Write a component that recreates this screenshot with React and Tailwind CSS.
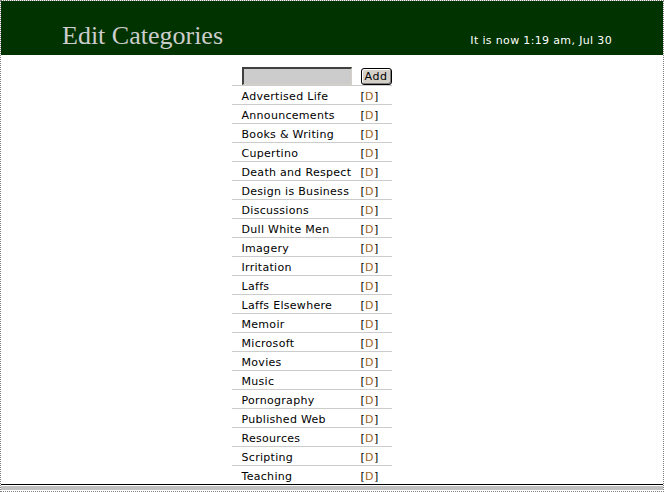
import React from "react";

const cats = [
  "Advertised Life",
  "Announcements",
  "Books & Writing",
  "Cupertino",
  "Death and Respect",
  "Design is Business",
  "Discussions",
  "Dull White Men",
  "Imagery",
  "Irritation",
  "Laffs",
  "Laffs Elsewhere",
  "Memoir",
  "Microsoft",
  "Movies",
  "Music",
  "Pornography",
  "Published Web",
  "Resources",
  "Scripting",
  "Teaching",
];

export default function App() {
  return (
    <div className="w-[664px] h-[492px] bg-white border border-dotted border-[#808080] flex flex-col overflow-hidden">
      <div className="h-[54px] bg-[#003300] flex items-end justify-between pl-[61px] pr-[51px] shrink-0">
        <div
          className="text-[#cccccc] text-[26px] leading-none pb-[6px]"
          style={{ fontFamily: '"Liberation Serif", "DejaVu Serif", serif' }}
        >
          Edit Categories
        </div>
        <div
          className="text-white text-[11px] leading-none pb-[9px] tracking-[0.35px]"
          style={{ fontFamily: '"DejaVu Sans", Verdana, sans-serif' }}
        >
          It is now 1:19 am, Jul 30
        </div>
      </div>
      <div
        className="h-[429px] overflow-hidden shrink-0 flex justify-center"
        style={{ fontFamily: '"DejaVu Sans", Verdana, sans-serif' }}
      >
        <div className="w-[160px] ml-[-41px] pt-[12px]">
          <div className="flex items-start h-[18px] pl-[10px]">
            <div className="w-[110px] h-[18px] bg-[#cccccc] border-t-2 border-l-2 border-[#404040] border-b border-r border-b-[#d4d0c8] border-r-[#d4d0c8]" />
            <button className="ml-[9px] mt-[1px] w-[31px] h-[17px] rounded-[3px] border border-black bg-[#d4d0c8] text-[11px] leading-none text-black tracking-[0.5px] shadow-[inset_1px_1px_0_#ffffff,inset_-1px_-1px_0_#808080]">
              Add
            </button>
          </div>
          {cats.map((c) => (
            <div
              key={c}
              className="flex items-center h-[19px] pt-[3px] border-t border-[#cccccc] text-[11px] leading-none text-black pl-[10px] tracking-[0.3px]"
            >
              <span className="w-[119px] whitespace-nowrap">{c}</span>
              <span>
                [<span className="text-[#a0642a]">D</span>]
              </span>
            </div>
          ))}
        </div>
      </div>
      <div className="h-px bg-black shrink-0" />
      <div className="h-px bg-white shrink-0" />
      <div className="h-[4px] bg-[#c0c0c0] shrink-0" />
    </div>
  );
}
